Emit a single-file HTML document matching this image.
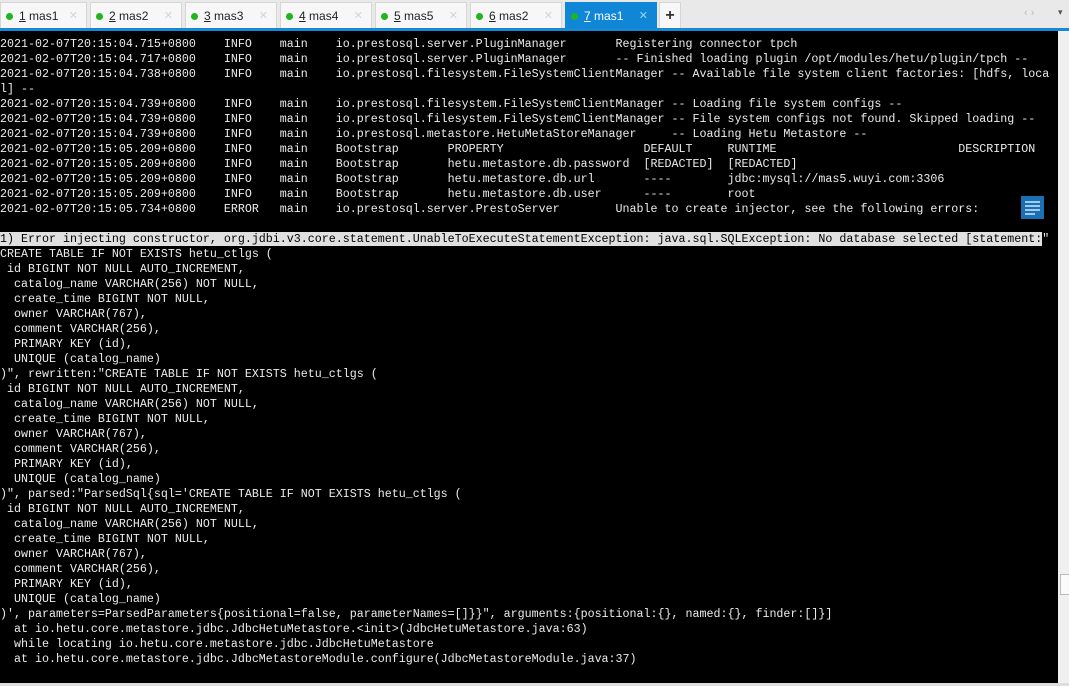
<!DOCTYPE html>
<html><head><meta charset="utf-8"><style>
body{margin:0;width:1069px;height:686px;overflow:hidden;background:#e9e9e9;font-family:"Liberation Sans",sans-serif;position:relative}
.bar{position:absolute;left:0;top:0;width:1069px;height:28px;background:#e9e9e9}
.tab{position:absolute;top:2px;height:26px;background:#f7f7f7;border:1px solid #d6d6d6;border-bottom:none;box-sizing:border-box;font-size:12px;color:#222;line-height:26px}
.tab .d{position:absolute;left:5px;top:10px;width:7px;height:7px;border-radius:50%;background:#1fb51f}
.tab .t{position:absolute;left:18px}
.tab .t u{text-decoration:underline}
.tab .x{position:absolute;right:8px;color:#d4d4d4;font-size:11px}
.tab.a{background:#0f86d6;color:#fff;border-color:#0f86d6}
.tab.a .x{color:#9fd0f2}
.blue{position:absolute;left:0;top:28px;width:1069px;height:3px;background:#1588d6}
.term{position:absolute;left:0;top:31px;width:1058px;height:652px;background:#000}
.sb{position:absolute;left:1058px;top:31px;width:11px;height:652px;background:#f0f0f0}
.bot{position:absolute;left:0;top:683px;width:1069px;height:3px;background:#ddd}
pre{position:absolute;left:0;top:37px;margin:0;font-family:"Liberation Mono","DejaVu Sans Mono",monospace;font-size:11.67px;line-height:15px;color:#ececec;white-space:pre}
.hl{background:#e0e0e0;color:#000}
.ico{position:absolute;left:1021px;top:196px;width:23px;height:23px;background:#1b6fb3}
.ico i{position:absolute;left:4px;width:15px;height:2px;background:#9ccbef}
</style></head><body>
<div class="bar"></div>
<div class="tab" style="left:0;width:87px"><span class="d"></span><span class="t"><u>1</u> mas1</span><span class="x">✕</span></div>
<div class="tab" style="left:90px;width:92px"><span class="d"></span><span class="t"><u>2</u> mas2</span><span class="x">✕</span></div>
<div class="tab" style="left:185px;width:92px"><span class="d"></span><span class="t"><u>3</u> mas3</span><span class="x">✕</span></div>
<div class="tab" style="left:280px;width:92px"><span class="d"></span><span class="t"><u>4</u> mas4</span><span class="x">✕</span></div>
<div class="tab" style="left:375px;width:92px"><span class="d"></span><span class="t"><u>5</u> mas5</span><span class="x">✕</span></div>
<div class="tab" style="left:470px;width:92px"><span class="d"></span><span class="t"><u>6</u> mas2</span><span class="x">✕</span></div>
<div class="tab a" style="left:565px;width:92px"><span class="d"></span><span class="t"><u>7</u> mas1</span><span class="x">✕</span></div>
<div class="tab" style="left:659px;width:22px;text-align:center;font-size:16px;font-weight:bold;color:#333">+</div>
<div style="position:absolute;left:1024px;top:7px;font-size:11px;color:#bbb">‹ ›</div>
<div style="position:absolute;left:1058px;top:7px;font-size:9px;color:#555">▾</div>
<div class="blue"></div>
<div class="term"></div>
<div class="sb"><div style="position:absolute;left:2px;top:543px;width:9px;height:19px;background:#fafafa;border:1px solid #bbb"></div></div>
<div class="bot"></div>
<pre>2021-02-07T20:15:04.715+0800    INFO    main    io.prestosql.server.PluginManager       Registering connector tpch
2021-02-07T20:15:04.717+0800    INFO    main    io.prestosql.server.PluginManager       -- Finished loading plugin /opt/modules/hetu/plugin/tpch --
2021-02-07T20:15:04.738+0800    INFO    main    io.prestosql.filesystem.FileSystemClientManager -- Available file system client factories: [hdfs, loca
l] --
2021-02-07T20:15:04.739+0800    INFO    main    io.prestosql.filesystem.FileSystemClientManager -- Loading file system configs --
2021-02-07T20:15:04.739+0800    INFO    main    io.prestosql.filesystem.FileSystemClientManager -- File system configs not found. Skipped loading --
2021-02-07T20:15:04.739+0800    INFO    main    io.prestosql.metastore.HetuMetaStoreManager     -- Loading Hetu Metastore --
2021-02-07T20:15:05.209+0800    INFO    main    Bootstrap       PROPERTY                    DEFAULT     RUNTIME                          DESCRIPTION
2021-02-07T20:15:05.209+0800    INFO    main    Bootstrap       hetu.metastore.db.password  [REDACTED]  [REDACTED]
2021-02-07T20:15:05.209+0800    INFO    main    Bootstrap       hetu.metastore.db.url       ----        jdbc:mysql://mas5.wuyi.com:3306
2021-02-07T20:15:05.209+0800    INFO    main    Bootstrap       hetu.metastore.db.user      ----        root
2021-02-07T20:15:05.734+0800    ERROR   main    io.prestosql.server.PrestoServer        Unable to create injector, see the following errors:

<span class="hl">1) Error injecting constructor, org.jdbi.v3.core.statement.UnableToExecuteStatementException: java.sql.SQLException: No database selected [statement:</span>"
CREATE TABLE IF NOT EXISTS hetu_ctlgs (
 id BIGINT NOT NULL AUTO_INCREMENT,
  catalog_name VARCHAR(256) NOT NULL,
  create_time BIGINT NOT NULL,
  owner VARCHAR(767),
  comment VARCHAR(256),
  PRIMARY KEY (id),
  UNIQUE (catalog_name)
)", rewritten:"CREATE TABLE IF NOT EXISTS hetu_ctlgs (
 id BIGINT NOT NULL AUTO_INCREMENT,
  catalog_name VARCHAR(256) NOT NULL,
  create_time BIGINT NOT NULL,
  owner VARCHAR(767),
  comment VARCHAR(256),
  PRIMARY KEY (id),
  UNIQUE (catalog_name)
)", parsed:"ParsedSql{sql='CREATE TABLE IF NOT EXISTS hetu_ctlgs (
 id BIGINT NOT NULL AUTO_INCREMENT,
  catalog_name VARCHAR(256) NOT NULL,
  create_time BIGINT NOT NULL,
  owner VARCHAR(767),
  comment VARCHAR(256),
  PRIMARY KEY (id),
  UNIQUE (catalog_name)
)', parameters=ParsedParameters{positional=false, parameterNames=[]}}", arguments:{positional:{}, named:{}, finder:[]}]
  at io.hetu.core.metastore.jdbc.JdbcHetuMetastore.&lt;init&gt;(JdbcHetuMetastore.java:63)
  while locating io.hetu.core.metastore.jdbc.JdbcHetuMetastore
  at io.hetu.core.metastore.jdbc.JdbcMetastoreModule.configure(JdbcMetastoreModule.java:37)</pre>
<div class="ico"><i style="top:5px"></i><i style="top:9px"></i><i style="top:13px"></i><i style="top:17px;width:10px"></i></div>
</body></html>
